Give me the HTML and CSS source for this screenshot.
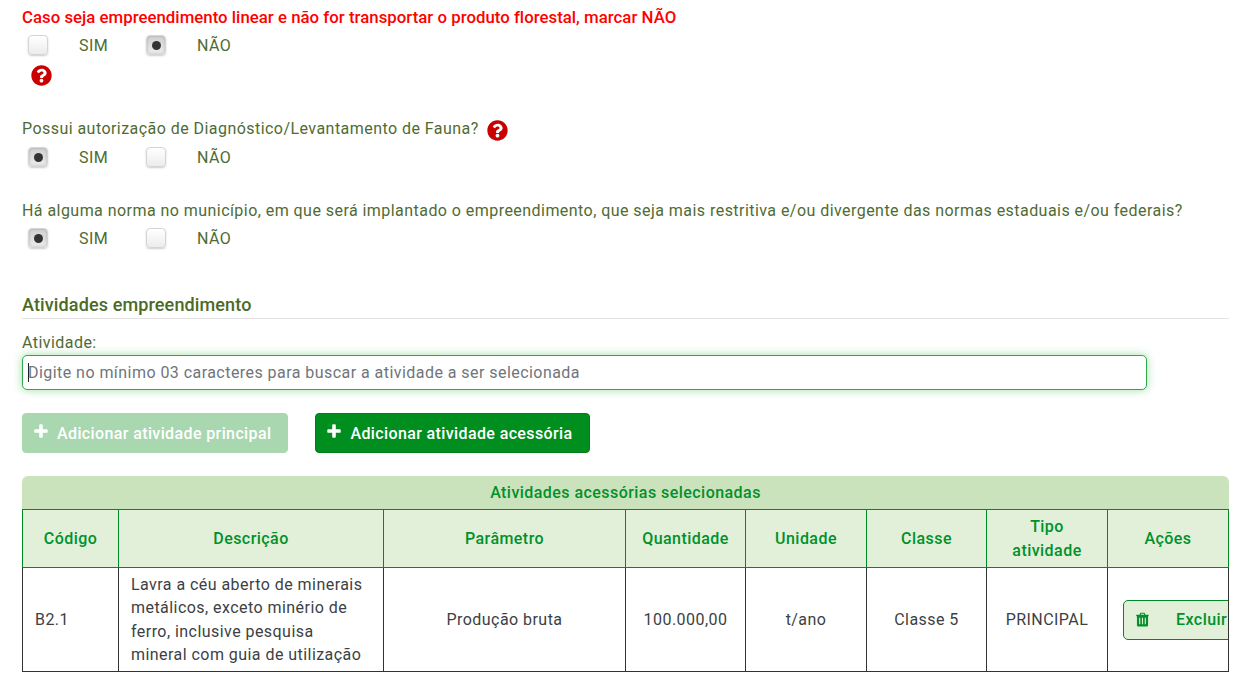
FILE: index.html
```html
<!DOCTYPE html>
<html>
<head>
	<title>Atividades empreendimento</title>
	<meta charset="utf-8">
	<link rel="stylesheet" href="styles.css">
</head>

<body>
	<svg class="defs" width="0" height="0">
		<symbol id="help" viewBox="0 0 512 512">
			<path fill-rule="evenodd" d="M504 256c0 137-111 248-248 248S8 393 8 256 119 8 256 8s248 111 248 248zM262 90c-54 0-89 23-117 64-4 6-3 13 3 17l35 26c6 4 13 3 18-2 18-23 31-36 58-36 21 0 46 13 46 33 0 15-12 22-32 34-23 13-54 30-54 71v8c0 7 5 12 12 12h56c7 0 12-5 12-12v-4c0-28 82-29 82-105 0-57-59-106-119-106zM256 336c-25 0-45 20-45 45s20 45 45 45 45-20 45-45-20-45-45-45z"/>
		</symbol>
		<symbol id="plus" viewBox="0 0 14 14">
			<path d="M5.2 1.2C5.2.7 5.6.3 6.100.3h1.800c.5 0 .9.4.9.9v4h4c.5 0 .9.4.9.9v1.800c0 .5-.4.9-.9.9h-4v4c0 .5-.4.900-.9.900H6.100c-.5 0-.9-.4-.9-.9v-4h-4c-.5 0-.9-.4-.9-.9V6.100c0-.5.4-.9.9-.9h4z"/>
		</symbol>
		<symbol id="trash" viewBox="0 0 14 16">
			<path fill-rule="evenodd" d="M4.800.6h4.400l1 2.200h3c.3 0 .5.2.5.500v.7c0 .3-.2.5-.5.5H13v9.300c0 1-.7 1.700-1.500 1.700h-9C1.700 15.500 1 14.800 1 13.800V4.500H.7c-.3 0-.5-.2-.5-.5v-.7c0-.3.2-.5.5-.5h3zM5.500 1.700l-.4 1.100h3.800l-.4-1.100zM3.400 6v7.200h1.200V6zM6.400 6v7.200h1.200V6zM9.400 6v7.200h1.200V6z"/>
		</symbol>
	</svg>

	<main>
		<p class="question alert">Caso seja empreendimento linear e não for transportar o produto florestal, marcar NÃO</p>
		<div class="options">
			<span class="radio"></span><label>SIM</label>
			<span class="radio checked"></span><label>NÃO</label>
		</div>
		<div class="help-row"><svg class="help"><use href="#help"/></svg></div>

		<p class="question second">Possui autorização de Diagnóstico/Levantamento de Fauna? <svg class="help"><use href="#help"/></svg></p>
		<div class="options">
			<span class="radio checked"></span><label>SIM</label>
			<span class="radio"></span><label>NÃO</label>
		</div>

		<p class="question third">Há alguma norma no município, em que será implantado o empreendimento, que seja mais restritiva e/ou divergente das normas estaduais e/ou federais?</p>
		<div class="options">
			<span class="radio checked"></span><label>SIM</label>
			<span class="radio"></span><label>NÃO</label>
		</div>

		<h2>Atividades empreendimento</h2>

		<label class="field-label" for="atividade">Atividade:</label>
		<div class="search">
			<span class="caret"></span>
			<input id="atividade" placeholder="Digite no mínimo 03 caracteres para buscar a atividade a ser selecionada">
		</div>

		<div class="actions">
			<button class="btn disabled"><svg><use href="#plus"/></svg>Adicionar atividade principal</button>
			<button class="btn"><svg><use href="#plus"/></svg>Adicionar atividade acessória</button>
		</div>

		<div class="panel">
			<div class="panel-title">Atividades acessórias selecionadas</div>
			<table>
				<colgroup>
					<col class="c-codigo"><col class="c-desc"><col class="c-param"><col class="c-qtd">
					<col class="c-un"><col class="c-classe"><col class="c-tipo"><col class="c-acoes">
				</colgroup>
				<thead>
					<tr>
						<th>Código</th>
						<th>Descrição</th>
						<th>Parâmetro</th>
						<th>Quantidade</th>
						<th>Unidade</th>
						<th>Classe</th>
						<th>Tipo atividade</th>
						<th>Ações</th>
					</tr>
				</thead>
				<tbody>
					<tr>
						<td class="left">B2.1</td>
						<td class="left">Lavra a céu aberto de minerais metálicos, exceto minério de ferro, inclusive pesquisa mineral com guia de utilização</td>
						<td>Produção bruta</td>
						<td>100.000,00</td>
						<td>t/ano</td>
						<td>Classe 5</td>
						<td>PRINCIPAL</td>
						<td class="cell-action"><button class="delete"><svg><use href="#trash"/></svg>Excluir</button></td>
					</tr>
				</tbody>
			</table>
		</div>
	</main>
</body>
</html>
```

FILE: styles.css
```css
* {
	box-sizing: border-box;
	margin: 0;
}

html, body {
	height: 681px;
	overflow: hidden;
}

body {
	font-family: Roboto, "Liberation Sans", sans-serif;
	font-size: 16px;
	letter-spacing: 0.45px;
	color: #4f6b33;
	background: white;
}

.defs {
	position: absolute;
}

main {
	padding: 5px 27px 0 22px;
}

.question {
	line-height: 24px;
}

.alert {
	color: #f00;
	font-size: 16.8px;
	font-weight: 500;
	letter-spacing: 0.02px;
}

.second {
	display: flex;
	align-items: center;
	gap: 8px;
	margin-top: 28px;
}

.second .help {
	align-self: flex-end;
}

.third {
	margin-top: 26px;
	margin-bottom: -1px;
}

.options {
	display: flex;
	align-items: center;
	height: 32px;
}

.options label {
	margin-left: 31px;
}

.options label:nth-child(2) {
	width: 67px;
}

.radio {
	width: 20px;
	height: 20px;
	border: 1px solid #d5d5d5;
	border-radius: 4px;
	background: linear-gradient(#fff, #ececec);
	box-shadow: 0 1px 2px rgba(0, 0, 0, 0.2);
	display: flex;
	align-items: center;
	justify-content: center;
}

.options .radio:first-child {
	margin-left: 6px;
}

.radio.checked {
	background: linear-gradient(#d0d0d0, #ececec);
	box-shadow: inset 0 0 3px rgba(0, 0, 0, 0.2), 0 1px 2px rgba(0, 0, 0, 0.2);
}

.radio.checked::after {
	content: "";
	width: 9px;
	height: 9px;
	border-radius: 50%;
	background: #333;
}

.help-row {
	height: 28px;
	padding-left: 9px;
	display: flex;
	align-items: center;
}

.help {
	width: 21px;
	height: 21px;
	fill: #c80000;
}

h2 {
	margin-top: 39px;
	padding-bottom: 1px;
	border-bottom: 1px solid #e3e3e3;
	font-size: 18px;
	font-weight: 500;
	letter-spacing: 0.13px;
	line-height: 24px;
	color: #4b6b25;
}

.field-label {
	display: block;
	margin-top: 12px;
	line-height: 24px;
}

.search {
	position: relative;
	width: 1125px;
	height: 35px;
}

.search input {
	width: 100%;
	height: 100%;
	padding: 0 5px;
	border: 1px solid #2fa84f;
	border-radius: 5px;
	outline: 0;
	box-shadow: 0 0 8px rgba(60, 190, 70, 0.5);
	font: inherit;
	letter-spacing: inherit;
	color: #555;
}

.search input::placeholder {
	color: #6f757b;
	opacity: 1;
}

.caret {
	position: absolute;
	left: 6px;
	top: 8px;
	width: 1px;
	height: 19px;
	background: #222;
}

.actions {
	display: flex;
	gap: 27px;
	margin-top: 23px;
}

.btn {
	display: flex;
	align-items: center;
	height: 40px;
	padding: 0 16px 0 11px;
	border: 1px solid #007f1c;
	border-radius: 4px;
	background: #008f1f;
	color: white;
	font: inherit;
	font-weight: 500;
	letter-spacing: 0.38px;
}

.btn svg {
	width: 14px;
	height: 14px;
	margin-right: 9px;
	margin-top: -4px;
	fill: white;
}

.btn.disabled {
	border-color: #a8d7b0;
	background: #a8d7b0;
}

.panel {
	margin-top: 23px;
	overflow: hidden;
}

.panel-title {
	height: 33px;
	border-radius: 6px 6px 0 0;
	background: #cbe3bd;
	color: #00912a;
	font-weight: 500;
	line-height: 33px;
	text-align: center;
}

table {
	width: 1207px;
	border-collapse: collapse;
	table-layout: fixed;
}

.c-codigo { width: 96px; }
.c-desc { width: 265px; }
.c-param { width: 242px; }
.c-qtd { width: 120px; }
.c-un { width: 121px; }
.c-classe { width: 120px; }
.c-tipo { width: 121px; }
.c-acoes { width: 121px; }

th {
	height: 58px;
	padding: 0 15px;
	border: 1px solid #008a25;
	background: #e2f0da;
	color: #00912a;
	font-weight: 500;
	line-height: 24px;
}

td {
	height: 104px;
	padding: 4px 12px;
	border: 1px solid #333;
	color: #3c3f44;
	line-height: 23.3px;
	text-align: center;
}

td.left {
	text-align: left;
}

.cell-action {
	padding: 0 0 0 15px;
	overflow: hidden;
}

.delete {
	display: flex;
	align-items: center;
	width: 130px;
	height: 40px;
	padding: 0 12px;
	border: 1px solid #008a25;
	border-radius: 5px;
	background: #e2f0da;
	color: #00912a;
	font: inherit;
	font-weight: 500;
	letter-spacing: inherit;
}

.delete svg {
	width: 13px;
	height: 15px;
	margin-right: 27px;
	fill: #00912a;
}
```
